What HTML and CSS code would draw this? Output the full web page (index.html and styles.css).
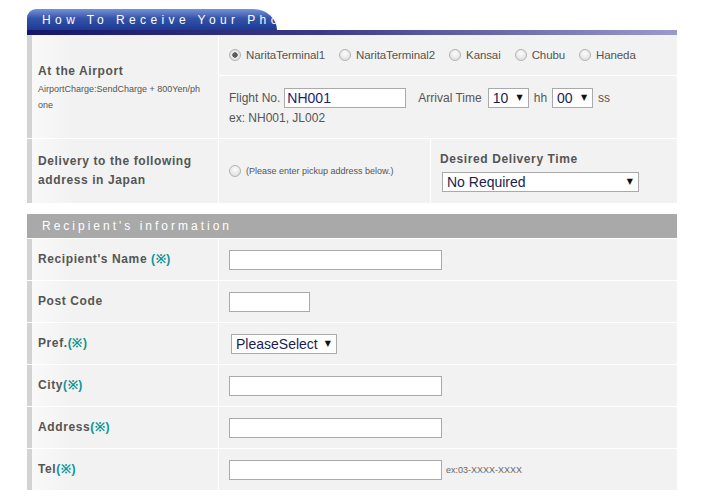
FILE: index.html
```html
<!DOCTYPE html>
<html lang="en">
<head>
    <meta charset="UTF-8">
    <meta name="viewport" content="width=device-width, initial-scale=1.0">
    <title>How To Receive Your Photo</title>
    <link rel="stylesheet" href="styles.css">
</head>
<body>
    <div class="page">
        <div class="tab-head">
            <div class="tab">How To Receive Your Photo</div>
        </div>
        <div class="bar"></div>

        <div class="grid receive">
            <div class="label airport">
                <div class="ttl">At the Airport</div>
                <div class="note">AirportCharge:SendCharge + 800Yen/ph<br>one</div>
            </div>
            <div class="cell wide radios">
                <label class="opt"><input type="radio" name="place" class="rad" checked>NaritaTerminal1</label>
                <label class="opt"><input type="radio" name="place" class="rad">NaritaTerminal2</label>
                <label class="opt"><input type="radio" name="place" class="rad">Kansai</label>
                <label class="opt"><input type="radio" name="place" class="rad">Chubu</label>
                <label class="opt"><input type="radio" name="place" class="rad">Haneda</label>
            </div>
            <div class="cell wide flight">
                <div class="line">
                    <span>Flight No.</span>
                    <input type="text" class="txt flight-no" value="NH001">
                    <span class="arr">Arrival Time</span>
                    <span class="sel small"><select><option>10</option></select></span>
                    <span>hh</span>
                    <span class="sel small"><select><option>00</option></select></span>
                    <span>ss</span>
                </div>
                <div class="ex">ex: NH001, JL002</div>
            </div>

            <div class="label">
                <div class="ttl">Delivery to the following address in Japan</div>
            </div>
            <div class="cell">
                <label class="opt"><input type="radio" name="place" class="rad"><span class="note">(Please enter pickup address below.)</span></label>
            </div>
            <div class="cell desired">
                <div>
                    <div class="ttl">Desired Delivery Time</div>
                    <span class="sel wide-sel"><select><option>No Required</option></select></span>
                </div>
            </div>
        </div>

        <div class="sec-head">Recipient's information</div>

        <div class="grid recipient">
            <div class="label"><div class="ttl">Recipient's Name <span class="req">(※)</span></div></div>
            <div class="cell"><input type="text" class="txt"></div>

            <div class="label"><div class="ttl">Post Code</div></div>
            <div class="cell"><input type="text" class="txt zip"></div>

            <div class="label"><div class="ttl">Pref.<span class="req">(※)</span></div></div>
            <div class="cell"><span class="sel pref"><select><option>PleaseSelect</option></select></span></div>

            <div class="label"><div class="ttl">City<span class="req">(※)</span></div></div>
            <div class="cell"><input type="text" class="txt"></div>

            <div class="label"><div class="ttl">Address<span class="req">(※)</span></div></div>
            <div class="cell"><input type="text" class="txt"></div>

            <div class="label"><div class="ttl">Tel<span class="req">(※)</span></div></div>
            <div class="cell"><input type="text" class="txt"><span class="note tel-ex">ex:03-XXXX-XXXX</span></div>
        </div>
    </div>
</body>
</html>
```

FILE: styles.css
```css
body {
    margin: 0;
    padding: 9px 0 0 27px;
    font-family: "Liberation Sans", Arial, sans-serif;
    font-size: 12px;
    color: #555;
    background: #fff;
}
.page {
    width: 650px;
}
.tab-head {
    height: 21px;
}
.tab {
    width: 250px;
    height: 21px;
    padding-left: 15px;
    box-sizing: border-box;
    border-radius: 9px 24px 0 0 / 9px 21px 0 0;
    background: linear-gradient(#7592d8, #3553a8 45%, #1d3a94);
    color: #fff;
    font-size: 12px;
    line-height: 23px;
    letter-spacing: 4.4px;
    white-space: nowrap;
    overflow: hidden;
}
.bar {
    height: 5px;
    background: linear-gradient(to right, #15166b, #3a3a86 45%, #9a9acb);
}
.grid {
    display: grid;
    grid-template-columns: 191px 211px 1fr;
    gap: 1px;
    background: #fff;
}
.receive {
    grid-template-rows: 40px 62px 64px;
}
.recipient {
    grid-template-columns: 191px 1fr;
    grid-auto-rows: 41px;
    margin-top: 1px;
}
.label {
    border-left: 5px solid #d3d3d3;
    background: linear-gradient(to right, #f9f9f9, #f2f2f2 40px);
    padding: 0 8px 0 6px;
    display: flex;
    flex-direction: column;
    justify-content: center;
}
.airport {
    grid-row: span 2;
    padding-top: 2px;
}
.ttl {
    font-weight: bold;
    letter-spacing: 0.6px;
    line-height: 19px;
    color: #555;
}
.req {
    color: #0b9494;
}
.note {
    font-size: 9px;
    line-height: 16px;
    color: #555;
}
.cell {
    background: #f2f2f2;
    padding: 0 10px;
    display: flex;
    align-items: center;
}
.wide {
    grid-column: span 2;
}
.opt {
    display: flex;
    align-items: center;
    margin-right: 14px;
}
.radios .opt {
    font-size: 11.5px;
    letter-spacing: -0.1px;
}
.rad {
    appearance: none;
    width: 12px;
    height: 12px;
    margin: 0 5px 0 0;
    border-radius: 50%;
    border: 1px solid #b2b2b2;
    background: radial-gradient(circle at 50% 35%, #fdfdfd, #d8d8d8);
    box-sizing: border-box;
}
.rad:checked {
    background: radial-gradient(circle, #5a5a5a 0 2.4px, #ececec 3px, #d8d8d8);
}
.flight {
    flex-direction: column;
    align-items: flex-start;
    justify-content: flex-start;
    padding-top: 12px;
}
.line {
    display: flex;
    align-items: center;
    gap: 5px;
}
.ex {
    margin-top: 3px;
    line-height: 14px;
}
.arr {
    margin-left: 7px;
    margin-right: 1px;
}
.txt {
    width: 213px;
    height: 20px;
    box-sizing: border-box;
    border: 1px solid #aaa;
    background: #fff;
    margin: 0;
    padding: 0 2px;
    font-family: "Liberation Sans", Arial, sans-serif;
    font-size: 14px;
    color: #1e1e6e;
}
.flight-no {
    width: 122px;
    margin-left: -1px;
}
.zip {
    width: 81px;
}
.sel {
    position: relative;
    display: inline-block;
}
.sel select {
    appearance: none;
    height: 20px;
    box-sizing: border-box;
    border: 1px solid #aaa;
    border-radius: 0;
    background: #fff;
    padding: 0 4px;
    font-family: "Liberation Sans", Arial, sans-serif;
    font-size: 14px;
    color: #1c1c50;
    width: 100%;
}
.sel::after {
    content: "▼";
    position: absolute;
    right: 6px;
    top: 5px;
    font-family: "DejaVu Sans", sans-serif;
    font-size: 8px;
    color: #111;
    pointer-events: none;
}
.small {
    width: 41px;
}
.desired {
    padding-left: 9px;
}
.desired .ttl {
    margin-bottom: 3px;
}
.wide-sel {
    width: 197px;
    margin-left: 2px;
}
.pref {
    width: 106px;
    margin-left: 2px;
}
.tel-ex {
    margin-left: 4px;
    color: #666;
}
.sec-head {
    margin-top: 11px;
    height: 24px;
    background: #a9a9a9;
    color: #fff;
    padding-left: 15px;
    font-size: 12px;
    line-height: 24px;
    letter-spacing: 3px;
}
```
